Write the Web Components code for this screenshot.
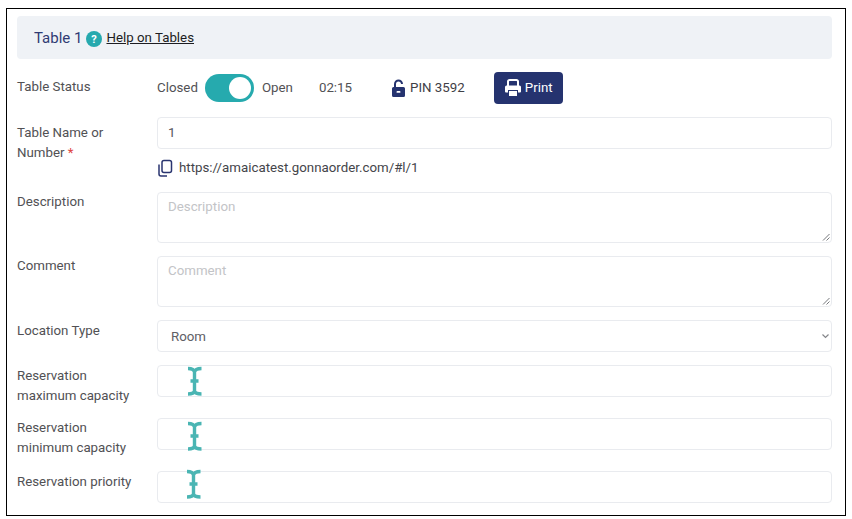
<!DOCTYPE html>
<html><head><meta charset="utf-8"><title>Table 1</title>
<style>
html,body{margin:0;padding:0;background:#fff;height:519px;overflow:hidden}
body{font:13.3px/20px Roboto,sans-serif;color:#515154;padding:8px 0 0 6px;box-sizing:border-box}
</style></head><body>
<table-panel>
  <panel-header>Table 1</panel-header>
  <form-row label="Table Status" h="51" pad="11"><status-bar></status-bar></form-row>
  <form-row h="75" pad="6">
    <span slot="label">Table Name or<br>Number <span style="color:#e0443e">*</span></span>
    <text-box value="1"></text-box>
    <link-line>https://amaicatest.gonnaorder.com/#l/1</link-line>
  </form-row>
  <form-row label="Description" h="64"><text-area placeholder="Description"></text-area></form-row>
  <form-row label="Comment" h="64"><text-area placeholder="Comment"></text-area></form-row>
  <form-row label="Location Type" h="45" pad="1"><select-box>Room</select-box></form-row>
  <form-row h="53" pad="1"><span slot="label">Reservation<br>maximum capacity</span><text-box cursor="1"></text-box></form-row>
  <form-row h="53"><span slot="label">Reservation<br>minimum capacity</span><text-box cursor="3"></text-box></form-row>
  <form-row label="Reservation priority" h="32" pad="1"><text-box cursor="-2" style="--cx:27px"></text-box></form-row>
</table-panel>
<script>
function def(name, css, html){
  customElements.define(name, class extends HTMLElement{
    connectedCallback(){
      if(this.shadowRoot) return;
      const r=this.attachShadow({mode:'open'});
      r.innerHTML='<style>'+css+'</style>'+(typeof html==='function'?html(this):html);
      if(name==='form-row') this.style.height=this.getAttribute('h')+'px';
    }
  });
}
def('table-panel',':host{display:block;box-sizing:border-box;width:840px;height:508px;border:1px solid #000;padding:7px 13px 0 10px;background:#fff}','<slot></slot>');
def('panel-header',`:host{display:flex;align-items:center;box-sizing:border-box;height:43px;background:#eff2f6;border-radius:4px;padding:0 0 0 17px;margin-bottom:7px}
.t{font-size:15px;color:#2f3b73;margin-right:4px}
svg{width:16px;height:16px;margin-right:4px;display:block;position:relative;top:1px}
a{color:#1d1d22;text-decoration:underline}`,
`<span class="t"><slot></slot></span><svg viewBox="0 0 16 16"><circle cx="8" cy="8" r="8" fill="#26a9ae"/><text x="8" y="12" text-anchor="middle" font-family="Roboto,sans-serif" font-weight="700" font-size="11" fill="#fff">?</text></svg><a>Help on Tables</a>`);
def('form-row',`:host{display:grid;grid-template-columns:140px 1fr;box-sizing:border-box}
.l{line-height:20px}
.c{display:flex;flex-direction:column;min-width:0}`,
h=>`<div class="l" style="margin-top:${h.getAttribute('pad')||0}px"><slot name="label">${h.getAttribute('label')||''}</slot></div><div class="c"><slot></slot></div>`);
def('text-box',`:host{display:block;position:relative;box-sizing:border-box;height:32px;border:1px solid #e9ebef;border-radius:4px;padding:5px 10px;line-height:20px;background:#fff;color:#57575c}
svg{position:absolute;left:var(--cx,28px);width:18px;height:31px;overflow:visible}`,
h=>`${h.getAttribute('value')||''}`+(h.hasAttribute('cursor')?`<svg viewBox="0 0 18 31" style="top:${h.getAttribute('cursor')-1}px"><path d="M2 2.500C6 2.500 8 3.500 8.500 6M15.500 2.500C11 2.500 9 3.500 8.500 6M8.500 6V25M2 28C6 28 8 27 8.500 25M15.500 28C11 28 9 27 8.500 25M4.500 15H12.500" fill="none" stroke="#4ab5b3" stroke-width="3.400"/></svg>`:''));
def('text-area',`:host{display:block;position:relative;box-sizing:border-box;height:51px;border:1px solid #e9ebef;border-radius:4px;padding:4px 10px;line-height:20px;color:#c3c4c7;background:#fff}
svg{position:absolute;right:1px;bottom:1px;width:8px;height:8px}`,
h=>`${h.getAttribute('placeholder')}<svg viewBox="0 0 8 8"><path d="M1 7.500L7.500 1M4.500 7.500L7.500 4.500" stroke="#77787c" stroke-width="1" fill="none"/></svg>`);
def('select-box',`:host{display:block;position:relative;box-sizing:border-box;height:32px;border:1px solid #e9ebef;border-radius:4px;padding:6px 13px 0;line-height:20px;color:#606065;background:#fff}
svg{position:absolute;right:1px;top:12px;width:9px;height:7px}`,
`<slot></slot><svg viewBox="0 0 9 7"><path d="M1.500 1.500L4.500 4.500L7.500 1.500" stroke="#85868a" stroke-width="1.200" fill="none"/></svg>`);
def('link-line',`:host{display:flex;align-items:center;height:20px;margin-top:9px;color:#44454a}
svg{width:16px;height:18px;margin-right:6px;display:block}`,
`<svg viewBox="0 0 16 18"><path d="M5 3.500a2 2 0 0 1 2-2h5.500a2 2 0 0 1 2 2v8a2 2 0 0 1-2 2H7a2 2 0 0 1-2-2z" fill="none" stroke="#2a3570" stroke-width="1.500"/><path d="M2 5.500V15a2 2 0 0 0 2 2h6" fill="none" stroke="#2a3570" stroke-width="1.500"/></svg><slot></slot>`);
def('status-bar',`:host{display:flex;align-items:center;height:44px}
span.tx{margin-top:-1px}
.sw{width:49px;height:28px;border-radius:14px;background:#26aaae;position:relative;margin:0 8px 0 7px;box-sizing:border-box;flex:none}
.sw i{position:absolute;right:3px;top:3px;width:22px;height:22px;background:#fff;border-radius:50%}
.time{margin-left:26px}
.pin{display:flex;align-items:center;margin-left:39px;color:#3f4046}
.pin svg{width:15px;height:18px;margin-right:4px;display:block}
button{font:inherit;display:flex;align-items:center;justify-content:center;width:69px;height:32px;margin-left:29px;border:0;border-radius:4px;background:#25336f;color:#fff;padding:0}
button svg{width:18px;height:18px;margin-right:3px;display:block}`,
`<span class="tx">Closed</span><span class="sw"><i></i></span><span class="tx">Open</span><span class="tx time">02:15</span>
<span class="pin tx"><svg viewBox="0 0 15 18"><path d="M4 8.500V5a3.500 3.500 0 0 1 7 0" fill="none" stroke="#25336f" stroke-width="2"/><path d="M2.500 8h10A1.500 1.500 0 0 1 14 9.500v7a1.500 1.500 0 0 1-1.500 1.500h-10A1.500 1.500 0 0 1 1 16.500v-7A1.500 1.500 0 0 1 2.500 8z" fill="#25336f"/><rect x="5.500" y="12" width="4" height="1.800" rx=".9" fill="#fff"/></svg>PIN 3592</span>
<button><svg viewBox="0 0 18 18"><path d="M4 7V2.500A1.500 1.500 0 0 1 5.500 1h7A1.500 1.500 0 0 1 14 2.500V7" fill="none" stroke="#fff" stroke-width="2"/><path d="M2.500 6.500h13A1.500 1.500 0 0 1 17 8v4.500a1 1 0 0 1-1 1h-2V11H4v2.500H2a1 1 0 0 1-1-1V8a1.500 1.500 0 0 1 1.500-1.500z" fill="#fff"/><rect x="5" y="12" width="8" height="5" fill="#fff"/></svg>Print</button>`);
</script>
</body></html>
